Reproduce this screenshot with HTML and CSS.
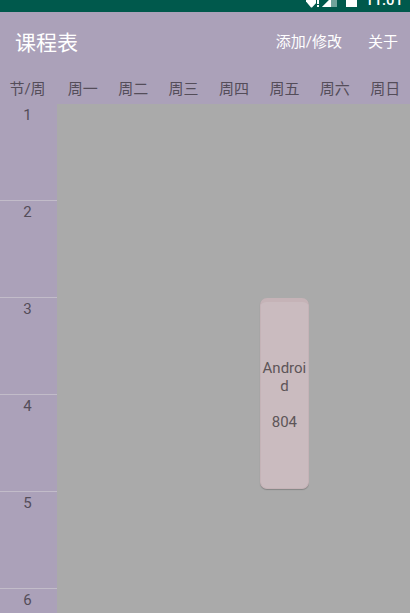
FILE: index.html
```
<!DOCTYPE html>
<html lang="zh-CN">
<head>
<meta charset="utf-8">
<meta name="viewport" content="width=device-width, initial-scale=1">
<title>课程表</title>
<link rel="stylesheet" href="styles.css">
</head>
<body>
<div class="status">
  <div class="status-row">
    <svg class="status-icons" width="52" height="16" viewBox="0 0 52 16" aria-hidden="true">
      <path fill="#fff" d="M-2 4Q5-1 12 4V9L6 15.500H5L-2 7Z"/>
      <path fill="#00594c" d="M10 0h5v16h-5z"/>
      <path fill="#fff" d="M11 3h2v9h-2zM11 13h2v2h-2z"/>
      <path fill="#6fa49b" d="M31 0v15H16z"/>
      <path fill="#fff" d="M25 6v9h-9z"/>
      <path fill="#fff" d="M40 2h3V0h5v2h3v13H40z"/>
    </svg>
    <time class="clock">11:01</time>
  </div>
</div>
<header class="appbar">
  <h1 class="title">课程表</h1>
  <nav class="actions">
    <button class="action" type="button">添加/修改</button>
    <button class="action" type="button">关于</button>
  </nav>
</header>
<main class="content">
  <table class="timetable">
    <colgroup><col class="col-period"><col span="7"></colgroup>
    <thead>
      <tr><th scope="col" class="corner">节/周</th><th scope="col">周一</th><th scope="col">周二</th><th scope="col">周三</th><th scope="col">周四</th><th scope="col">周五</th><th scope="col">周六</th><th scope="col">周日</th></tr>
    </thead>
    <tbody>
      <tr><th scope="row">1</th><td></td><td></td><td></td><td></td><td></td><td></td><td></td></tr>
      <tr><th scope="row">2</th><td></td><td></td><td></td><td></td><td></td><td></td><td></td></tr>
      <tr><th scope="row">3</th><td></td><td></td><td></td><td></td><td class="booked" rowspan="2"><button class="course" type="button"><span>Android</span><span>804</span></button></td><td></td><td></td></tr>
      <tr><th scope="row">4</th><td></td><td></td><td></td><td></td><td></td><td></td></tr>
      <tr><th scope="row">5</th><td></td><td></td><td></td><td></td><td></td><td></td><td></td></tr>
      <tr><th scope="row">6</th><td></td><td></td><td></td><td></td><td></td><td></td><td></td></tr>
    </tbody>
  </table>
</main>
</body>
</html>
```
FILE: styles.css
```
* { box-sizing: border-box; }

body {
  margin: 0;
  height: 100vh;
  display: flex;
  flex-direction: column;
  overflow: hidden;
  background: #aaa;
  color: #544d59;
  font-family: Roboto, "Noto Sans CJK SC", sans-serif;
  font-size: 15px;
}

.status {
  flex: none;
  height: 12px;
  display: flex;
  align-items: flex-end;
  justify-content: flex-end;
  overflow: hidden;
  background: #00594c;
  color: #fff;
}

.status-row {
  display: flex;
  align-items: center;
  gap: 7px;
  padding: 0 7px 4px 0;
}

.status-icons { display: block; }

.clock {
  font-size: 15px;
  font-weight: 500;
  line-height: 16px;
}

.appbar {
  flex: none;
  height: 60px;
  display: flex;
  align-items: center;
  justify-content: space-between;
  padding: 0 12px 0 15px;
  background: #aba1b9;
  color: #fff;
}

.title {
  margin: 0;
  padding-top: 2px;
  font-size: 21px;
  font-weight: 400;
  line-height: 30px;
}

.actions {
  display: flex;
  gap: 26px;
}

.action {
  border: 0;
  padding: 0;
  background: none;
  color: inherit;
  font: inherit;
  line-height: 24px;
}

.content {
  flex: 1;
  min-height: 0;
  overflow: auto;
  scrollbar-width: none;
}

.timetable {
  width: 100%;
  table-layout: fixed;
  border-spacing: 0;
}

.col-period { width: 57px; }

th {
  padding: 0;
  background: #aba1b9;
  font-weight: 400;
}

thead th {
  height: 32px;
  padding: 2px 0 0 1px;
  line-height: 30px;
  white-space: nowrap;
}

thead .corner { padding: 2px 2px 0 0; }

tbody th {
  height: 97px;
  padding: 1px 2px 0 0;
  border-bottom: 1px solid #c2bcc9;
  vertical-align: top;
  line-height: 20px;
}

td {
  padding: 0;
  background: #aaa;
}

.booked {
  padding: 0 0 2px 1px;
  vertical-align: top;
}

.course {
  width: 100%;
  height: 191px;
  display: flex;
  flex-direction: column;
  align-items: stretch;
  justify-content: center;
  gap: 18px;
  padding: 0 1px;
  border: 1px solid #c5b3b7;
  border-top: 4px solid #c5b3b7;
  border-radius: 7px;
  background: #cabbbf;
  box-shadow: 0 1px 1px #858585;
  color: #5d5558;
  font: inherit;
  line-height: 18px;
  overflow-wrap: anywhere;
}
```
